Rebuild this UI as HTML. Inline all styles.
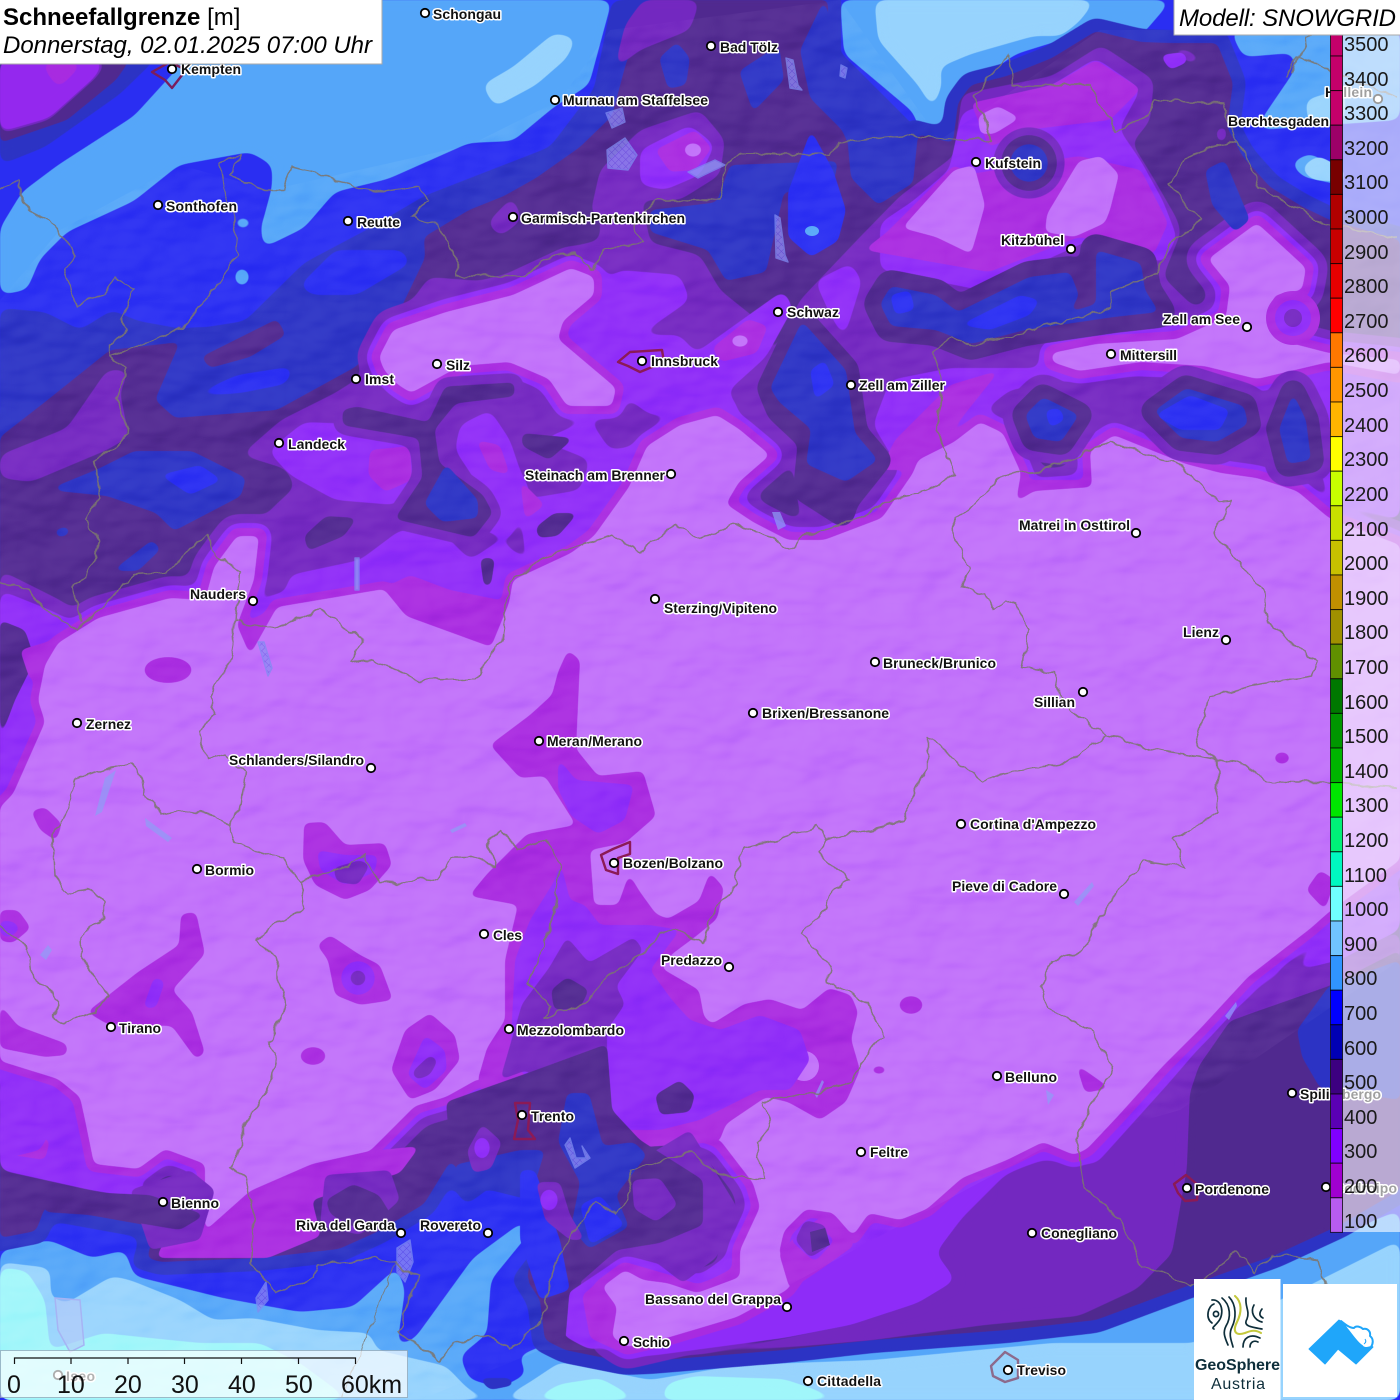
<!DOCTYPE html>
<html><head><meta charset="utf-8"><title>Schneefallgrenze</title>
<style>
html,body{margin:0;padding:0;width:1400px;height:1400px;overflow:hidden;background:#55a6f9}
svg{display:block;position:absolute;left:0;top:0}
.lb text{font:bold 14px "Liberation Sans",sans-serif;fill:#111;stroke:#fff;stroke-width:3px;paint-order:stroke;stroke-linejoin:round}
.dt circle{fill:#fff;stroke:#000;stroke-width:1.8}
.tk text{font:20px "Liberation Sans",sans-serif;fill:#1a1a1a}
</style></head><body>
<svg width="1400" height="1400" viewBox="0 0 1400 1400" xmlns="http://www.w3.org/2000/svg">
<defs>
<filter id="s" filterUnits="userSpaceOnUse" x="0" y="0" width="1400" height="1400" color-interpolation-filters="sRGB"><feGaussianBlur stdDeviation="5.5"/><feComponentTransfer><feFuncA type="linear" slope="14" intercept="-6.5"/></feComponentTransfer></filter>
<filter id="t" filterUnits="userSpaceOnUse" x="0" y="0" width="1400" height="1400" color-interpolation-filters="sRGB"><feGaussianBlur stdDeviation="3.4"/><feComponentTransfer><feFuncA type="linear" slope="10" intercept="-4.5"/></feComponentTransfer></filter>
<filter id="hill" filterUnits="userSpaceOnUse" x="0" y="0" width="1400" height="1400" color-interpolation-filters="sRGB"><feTurbulence type="fractalNoise" baseFrequency=".014 .024" numOctaves="3" seed="11" result="n"/><feDiffuseLighting in="n" surfaceScale="10" diffuseConstant=".74" lighting-color="#fff"><feDistantLight azimuth="225" elevation="58"/></feDiffuseLighting></filter>
<filter id="w" filterUnits="userSpaceOnUse" x="0" y="0" width="1400" height="1400"><feTurbulence type="fractalNoise" baseFrequency=".07" numOctaves="2" seed="4" result="n"/><feDisplacementMap in="SourceGraphic" in2="n" scale="9" xChannelSelector="R" yChannelSelector="G"/></filter>
<clipPath id="mt"><path d="M0 300L60 230L180 165L270 190L470 145L560 100L610 30L840 0L940 140L1100 30L1400 30L1400 960L1180 1110L1040 1150L780 1290L640 1350L540 1350L420 1400L0 1400Z"/></clipPath>
<pattern id="h" width="5" height="5" patternUnits="userSpaceOnUse" patternTransform="rotate(45)"><rect width="5" height="5" fill="#8f8cf5"/><path d="M0 0H5M0 0V5" stroke="#6b5be6" stroke-width="1"/></pattern>
<path id="m" d="M0 807L13 794L45 722L38 700L45 665L58 643L98 618L170 598L205 600L214 567L237 536L259 536L254 580L237 625L250 655L277 607L384 589L406 616L491 647L509 603L513 580L571 553L594 536L629 487L647 446L680 425L717 415L739 429L770 455L739 482L726 504L753 522L788 540L824 540L882 518L913 473L918 460L954 442L980 422L1003 433L1021 473L1016 502L1034 491L1092 487L1090 451L1114 435L1141 446L1186 464L1221 473L1257 478L1297 491L1329 518L1400 545L1400 860L1329 912L1311 928L1248 977L1199 1030L1163 1066L1119 1115L1087 1149L1074 1155L1043 1142L1007 1160L962 1178L927 1209L900 1220L869 1213L853 1236L833 1213L806 1209L784 1231L779 1253L797 1276L787 1290L737 1317L670 1337L627 1347L612 1337L617 1307L602 1287L625 1270L643 1280L667 1283L697 1293L740 1277L740 1250L760 1207L753 1183L720 1140L600 1100L478 1079L446 1097L415 1106L370 1151L312 1169L254 1191L205 1231L205 1164L165 1149L138 1169L94 1164L85 1120L80 1097L58 1079L0 1061Z
M379 357L393 330L446 312L513 295L571 268L594 277L594 295L563 321L558 339L616 388L612 406L567 406L549 379L509 362L460 366L411 393L397 384L384 370Z
M1208 259L1257 223L1306 268L1302 290L1275 295L1266 317L1275 339L1329 353L1400 360L1400 375L1329 362L1257 379L1204 366L1141 362L1079 371L1052 362L1052 353L1096 344L1177 339L1226 317L1230 286Z"/>
<path id="main" d="M0 437L45 402L110 350L180 342L155 400L175 418L277 410L357 366L400 310L425 258L424 237L469 210L504 196L536 178L580 147L612 116L625 67L647 0L828 0L828 58L846 125L851 178L878 205L913 183L918 134L953 143L958 103L971 85L1007 76L1052 58L1096 31L1141 42L1170 43L1217 43L1233 83L1227 127L1243 157L1270 187L1303 207L1330 220L1400 240L1400 1190L1340 1225L1275 1255L1190 1285L1096 1320L1007 1330L873 1340L784 1350L650 1361L625 1362L565 1350L545 1340L540 1300L527 1280L550 1250L554 1146L518 1151L469 1187L451 1160L424 1204L379 1231L339 1249L259 1258L161 1262L147 1258L156 1227L45 1207L36 1231L0 1238Z"/>
</defs>

<!-- base -->
<rect width="1400" height="1400" fill="#2a2ef2"/>
<g fill="#55a6f9" filter="url(#s)">
<path d="M185 60L134 116L58 165L22 192L0 228L0 295L27 290L40 259L67 232L134 201L179 165L250 152L272 165L272 187L261 228L263 248L304 228L335 192L388 179L469 143L513 141L554 107L589 85L612 0L0 0L0 60Z"/>
<path d="M840 0L844 54L913 112L922 136L940 134L958 80L971 85L1016 54L1074 36L1101 20L1141 36L1172 0Z"/>
<path d="M1230 30L1243 57L1293 53L1295 70L1263 117L1258 130L1287 128L1400 120L1400 30Z"/>
<path d="M1290 163L1310 153L1345 173L1345 186L1303 177Z"/>
<path d="M0 1251L49 1240L92 1258L125 1250L134 1276L223 1298L300 1312L353 1307L397 1267L405 1290L397 1347L415 1338L473 1258L522 1222L531 1231L491 1280L487 1334L460 1356L469 1379L500 1388L527 1374L518 1356L549 1343L571 1345L625 1368L696 1367L784 1358L873 1350L1007 1340L1096 1332L1194 1295L1275 1262L1350 1230L1400 1210L1400 1400L0 1400Z"/>
<ellipse cx="243" cy="223" rx="10" ry="6"/><ellipse cx="242" cy="277" rx="8" ry="10"/>
</g>
<g fill="#97d3fd" filter="url(#s)">
<path d="M482 85L513 67L554 33L576 38L567 58L536 85L495 107Z"/>
<path d="M875 7L878 40L918 85L933 109L942 85L940 67L971 54L1034 36L1061 36L1079 22L1096 0L875 0Z"/>
<path d="M1305 100L1345 88L1345 120L1310 130Z"/>
<path d="M1300 168L1318 155L1345 170L1345 182L1312 180Z"/>
<path d="M0 1262L50 1268L51 1298L67 1303L112 1276L130 1280L180 1300L213 1320L253 1318L317 1330L370 1333L377 1350L407 1357L446 1366L469 1390L500 1400L530 1382L560 1362L650 1380L739 1365L873 1360L1052 1343L1194 1343L1400 1240L1400 1400L0 1400Z"/>
</g>
<g fill="#a0f6fa" filter="url(#s)">
<path d="M0 1267L27 1271L45 1300L50 1350L103 1333L150 1338L200 1343L260 1343L300 1363L350 1400L0 1400Z"/>
<path d="M668 1383L695 1376L784 1379L846 1400L660 1400Z"/>
<path d="M530 1400L560 1384L600 1378L640 1400Z"/>
</g>

<!-- NW dark blue + top-left wedge -->
<g fill="#2c33c4" filter="url(#s)">
<path d="M0 308L45 312L80 330L112 310L138 321L188 330L245 321L304 263L370 228L424 196L550 147L594 89L612 0L660 0L660 300L300 440L0 460Z"/>
<path d="M0 165L45 147L120 94L160 55L0 55Z"/>
<use href="#main" fill="none" stroke="#2c33c4" stroke-width="26"/>
</g>
<g fill="#2a2ef2" filter="url(#s)">
<path d="M299 286L335 250L402 250L411 263L357 295L312 295Z"/>
<path d="M188 397L237 375L295 366L286 384L241 393Z"/>
</g>
<g fill="#50298f" filter="url(#t)">
<use href="#main"/>
<path d="M0 143L67 120L116 80L130 60L0 60Z"/>
<path d="M201 357L277 319L286 335L250 357L210 368Z"/>
</g>
<g fill="#7328c0" filter="url(#s)">
<path d="M0 134L49 120L98 76L107 60L0 60Z"/>
</g>
<path d="M0 60H104L96 76L49 118L0 132Z" fill="#9428ee" filter="url(#s)"/>
<path d="M40 62L85 62L58 89Z" fill="#a82be0" filter="url(#s)"/>

<!-- L400 -->
<g fill="#7328c0" filter="url(#s)">
<use href="#m" fill="none" stroke="#7328c0" stroke-width="44" stroke-linejoin="round"/>
<path d="M0 455L67 428L107 370L129 370L120 393L129 437L107 450L31 482L0 478Z"/>
<path d="M241 455L281 420L335 393L357 379L380 345L429 277L480 281L527 279L554 259L576 257L640 240L700 255L720 290L770 330L770 390L800 440L760 450L720 410L650 420L629 487L594 536L571 553L513 580L509 603L491 647L406 616L384 589L277 607L259 536L270 510L295 487L286 469Z"/>
<path d="M600 170L640 130L700 110L725 140L720 175L680 200L640 200L610 215L590 215Z"/>
<path d="M558 250L600 240L600 215L640 195L650 240L600 260Z"/>
<path d="M614 70L625 25L643 0L700 0L690 30L640 50Z"/>
<path d="M487 223L513 196L522 220L500 237Z"/>
<path d="M860 237L900 196L954 156L962 94L1007 85L1052 76L1101 45L1154 80L1150 121L1132 143L1154 179L1177 219L1181 232L1163 277L1199 312L1253 310L1290 370L1330 490L1340 540L1250 480L1100 440L1000 430L920 470L882 525L800 515L790 450L760 380L800 300Z"/>
<path d="M0 570L60 600L90 620L40 660L20 760L0 810Z"/>
<path d="M1165 47L1186 49L1205 60L1190 64Z"/>
<!-- SE -->
<path d="M936 1253L962 1218L1007 1173L1043 1160L1096 1164L1168 1084L1230 1012L1280 975L1340 960L1400 930L1400 960L1330 986L1230 1021L1199 1066L1190 1093L1187 1169L1172 1254L1137 1289L1079 1316L985 1325L873 1340L760 1350L650 1358L784 1338L851 1325L918 1303L956 1280Z"/>
</g>
<!-- L300 -->
<g fill="#8e2cf8" filter="url(#s)">
<path d="M268 451L304 422L380 425L415 440L418 480L395 505L335 500L290 475Z"/>
<path d="M460 425L490 410L510 440L520 470L530 490L510 540L470 525L475 480L455 450Z"/>
<path d="M280 610L290 575L360 560L400 530L440 530L470 560L500 540L525 560L510 600L495 645L440 630L410 615L384 589Z"/>
<path d="M540 440L590 420L610 450L640 445L630 490L600 530L570 550L525 555L520 500L580 490L590 460Z"/>
<path d="M565 310L620 270L680 275L690 300L640 335L680 335L720 380L740 410L650 415L630 400L610 370L565 340Z"/>
<path d="M690 357L753 312L784 290L793 308L766 357L726 393L695 375Z"/>
<path d="M640 150L690 125L715 145L700 175L665 190L640 185Z"/>
<path d="M815 281L851 263L862 281L844 339L829 312Z"/>
<path d="M880 223L913 201L949 170L962 112L1052 85L1096 58L1141 89L1119 129L1141 161L1163 201L1177 237L1163 263L1090 240L980 290L880 270Z"/>
<path d="M873 425L890 380L950 368L1040 368L1200 372L1262 370L1340 372L1340 410L1290 395L1240 380L1100 375L1010 390L960 430L900 470Z"/>
<path d="M1330 370L1400 385L1400 520L1330 500L1310 440L1312 395Z"/>
<path d="M1000 440L1060 450L1150 440L1250 470L1329 510L1300 495L1100 440Z"/>
<path d="M0 590L50 610L80 625L50 670L25 790L0 810Z"/>
<path d="M0 1075L60 1085L80 1100L85 1165L130 1170L150 1200L90 1190L0 1170Z"/>
<!-- SE L300 -->
<path d="M650 1338L739 1311L797 1280L851 1245L918 1218L998 1164L1043 1146L1083 1164L1163 1084L1230 1012L1297 968L1329 932L1400 880L1400 930L1340 960L1280 975L1230 1012L1168 1084L1096 1164L1043 1160L1007 1173L962 1218L936 1253L956 1280L918 1303L851 1325L784 1338L650 1356Z"/>
<path d="M565 1295L625 1255L700 1275L735 1250L750 1215L775 1285L660 1335L590 1350L562 1335Z"/>
<use href="#m" fill="none" stroke="#8e2cf8" stroke-width="26" stroke-linejoin="round"/>
</g>
<g fill="#50298f" filter="url(#t)">
<path d="M0 620L25 630L35 660L15 700L0 740Z"/>
<path d="M0 1097L22 1100L49 1113L22 1129L0 1129Z"/>
</g>
<!-- L200 -->
<g fill="#a82be0" filter="url(#t)">
<path d="M370 450L410 446L412 480L385 492L368 475Z"/>
<path d="M476 440L500 445L510 475L490 470Z"/>
<path d="M520 480L545 505L525 520Z"/>
<path d="M712 348L748 319L768 326L757 353L721 362Z"/>
<path d="M655 150L695 130L712 148L695 170L670 172Z"/>
<path d="M971 103L1052 85L1096 60L1141 89L1110 120L1034 129L989 147Z"/>
<path d="M887 232L954 165L971 174L1079 156L1141 170L1168 223L1154 254L1079 237L989 272L864 250Z"/>
<path d="M895 440L950 385L1000 370L960 420L920 470L880 470Z"/>
<path d="M1010 480L1090 480L1092 498L1016 506Z"/>
<path d="M240 625L262 680L290 680L322 655L275 640L277 607Z"/>
<path d="M20 650L70 635L55 665L30 680Z"/>
<path d="M380 590L410 575L450 590L500 600L495 645L440 632L406 612Z"/>
<path d="M582 1295L625 1262L670 1275L700 1285L745 1262L770 1280L680 1335L620 1352L590 1338Z"/>
<use href="#m" fill="none" stroke="#a82be0" stroke-width="16" stroke-linejoin="round"/>
</g>
<!-- L100 main -->
<g filter="url(#t)"><use href="#m" fill="#c06ffa"/></g>
<g fill="#c06ffa" filter="url(#t)">
<ellipse cx="693" cy="150" rx="9" ry="7"/><ellipse cx="740" cy="341" rx="9" ry="6"/>
<path d="M902 228L954 170L974 165L985 205L976 237L971 254L936 237Z"/>
<path d="M1047 214L1079 161L1101 156L1119 174L1110 210L1105 223L1074 237L1045 232Z"/>
<path d="M978 116L998 106L1020 118L994 134L980 134Z"/>
</g>
<circle cx="1293" cy="318" r="27" fill="#a82be0"/><circle cx="1293" cy="318" r="18" fill="#8e2cf8"/><circle cx="1293" cy="318" r="9" fill="#7328c0"/>

<!-- Dark network north / blue islands -->
<g filter="url(#s)" fill="#7328c0">
<circle cx="1029" cy="163" r="36"/>
<path d="M1025 415L1043 397L1079 415L1061 442L1034 438Z" stroke="#7328c0" stroke-width="46" stroke-linejoin="round"/>
<path d="M1154 411L1186 388L1244 406L1248 424L1217 442L1181 438Z" stroke="#7328c0" stroke-width="46" stroke-linejoin="round"/>
<path d="M1279 429L1293 393L1306 420L1311 460L1288 464Z" stroke="#7328c0" stroke-width="46" stroke-linejoin="round"/>
<path d="M344 411L357 408L429 424L446 388L513 384L513 395L455 402L433 429L438 464L482 496L491 513L473 536L397 518L424 478L420 437L344 424Z" stroke="#7328c0" stroke-width="22" stroke-linejoin="round"/>
</g>
<g fill="#50298f" filter="url(#t)">
<circle cx="1029" cy="163" r="28"/>
<path d="M1025 415L1043 397L1079 415L1061 442L1034 438Z" stroke="#50298f" stroke-width="26" stroke-linejoin="round"/>
<path d="M1154 411L1186 388L1244 406L1248 424L1217 442L1181 438Z" stroke="#50298f" stroke-width="26" stroke-linejoin="round"/>
<path d="M1279 429L1293 393L1306 420L1311 460L1288 464Z" stroke="#50298f" stroke-width="26" stroke-linejoin="round"/>
<path d="M344 411L357 408L429 424L446 388L513 384L513 395L455 402L433 429L438 464L482 496L491 513L473 536L397 518L424 478L420 437L344 424Z" stroke="#50298f" stroke-width="3"/>
<path d="M522 433L574 438L549 460L522 446Z"/>
<path d="M304 536L326 516L357 518L344 536L308 551Z"/>
<path d="M536 527L554 513L578 513L558 536L538 538Z"/>
<path d="M480 558L495 558L491 585L484 587Z"/>
<path d="M770 388L802 321L846 370L855 433L878 460L846 500L842 513L806 490L811 440L779 410Z" stroke="#50298f" stroke-width="26" stroke-linejoin="round"/>
<path d="M880 304L891 286L936 295L958 312L1029 277L1070 272L1079 295L1070 312L1096 304L1096 250L1141 263L1145 290L1159 312L1114 317L1025 330L971 344L936 330L891 326Z" stroke="#50298f" stroke-width="32" stroke-linejoin="round"/>
</g>
<g fill="#2c33c4" filter="url(#t)">
<circle cx="1029" cy="163" r="19"/>
<path d="M1025 415L1043 397L1079 415L1061 442L1034 438Z"/>
<path d="M1154 411L1186 388L1244 406L1248 424L1217 442L1181 438Z"/>
<path d="M1279 429L1293 393L1306 420L1311 460L1288 464Z"/>
<path d="M770 388L802 321L846 370L855 433L878 460L846 482L806 464L811 429L779 402Z"/>
<path d="M880 304L891 286L936 295L958 312L1029 277L1070 272L1079 295L1070 312L1096 304L1096 250L1141 263L1145 290L1159 312L1114 317L1025 330L971 344L936 330L891 326Z"/>
<path d="M424 504L446 464L478 500L478 518L442 522Z"/>
<path d="M54 487L98 469L134 451L192 451L246 478L241 496L174 531L156 513L107 496L58 491Z"/>
<path d="M112 571L152 540L161 549L138 571Z"/>
<path d="M54 530L68 526L70 534L58 538Z"/>
<path d="M717 201L730 165L838 161L833 187L784 192L766 272L726 281L708 250Z"/>
<path d="M650 210L695 205L726 201L708 250L650 232Z"/>
<path d="M659 58L677 42L690 58L686 85L668 89Z"/>
<path d="M739 71L779 45L784 80L753 112Z"/>
<path d="M824 0L842 54L918 130L900 174L882 196L860 170L842 130L810 98L800 50Z"/>
<path d="M1205 170L1225 160L1250 220L1235 232L1212 205Z"/>
</g>
<g fill="#2a2ef2" filter="url(#t)">
<path d="M788 192L811 130L833 170L846 210L838 241L811 257L788 237Z"/>
<path d="M1155 415L1190 395L1230 410L1220 430L1180 430Z"/>
<path d="M1045 410L1060 408L1065 420L1050 428Z"/>
<path d="M960 325L1020 295L1040 300L1030 315L990 330Z"/>
<path d="M890 295L910 290L915 310L895 315Z"/>
<path d="M160 475L200 465L222 480L190 495Z"/>
<path d="M810 370L825 360L835 385L815 400Z"/>
</g>
<ellipse cx="812" cy="231" rx="7" ry="5" fill="#55a6f9"/>

<!-- K map small bright/violet -->
<path d="M1160 55L1184 52L1188 62L1170 70Z" fill="#8e2cf8" filter="url(#t)"/>
<path d="M1216 130L1226 126L1226 140L1218 142Z" fill="#7328c0" filter="url(#t)"/>

<!-- L200 islands on L100 -->
<g fill="#a82be0" filter="url(#t)">
<ellipse cx="168" cy="670" rx="24" ry="13"/>
<path d="M31 811L45 807L62 824L56 841L40 830Z"/>
<path d="M304 823L325 822L345 845L385 843L392 865L370 890L345 900L315 885L303 860Z"/>
<path d="M87 1012L138 972L179 945L181 914L196 912L205 954L172 990L192 1012L205 1053L196 1059L172 1026L107 1024Z"/>
<path d="M317 945L330 935L360 955L380 965L393 1000L360 1005L335 995L328 960Z"/>
<ellipse cx="313" cy="1056" rx="13" ry="9"/>
<path d="M391 1070L405 1030L430 1013L455 1035L460 1060L435 1090L410 1100Z"/>
<path d="M0 910L18 910L31 928L13 943L0 941Z"/>
<path d="M0 1004L18 1026L67 1044L67 1055L45 1057L0 1048Z"/>
<ellipse cx="911" cy="1005" rx="12" ry="9"/><ellipse cx="879" cy="1070" rx="8" ry="4"/>
<path d="M1076 1064L1110 1088L1085 1093Z"/>
<ellipse cx="1282" cy="758" rx="8" ry="6"/>
<path d="M1306 890L1320 870L1335 880L1325 910Z"/>
<!-- South Central L200 -->
<path d="M558 672L568 650L580 660L576 749L598 776L643 771L656 816L625 843L590 850L594 905L618 905L629 874L640 892L656 914L668 919L699 901L710 872L724 888L717 919L695 937L672 954L661 968L699 990L704 1017L712 1024L744 1004L770 999L802 1010L829 988L851 995L858 1012L851 1039L860 1070L846 1102L820 1120L788 1102L766 1097L726 1124L719 1142L600 1150L480 1090L478 1079L487 1048L505 1020L505 960L518 905L469 896L487 874L527 834L576 825L545 776L520 778L490 745L530 715L552 695Z"/>
<path d="M156 1258L165 1240L205 1231L250 1191L312 1164L370 1151L420 1146L400 1173L312 1200L321 1236L268 1258Z"/>
<path d="M10 1130L50 1140L45 1160L12 1155Z"/>
<path d="M779 1253L797 1235L830 1210L855 1245L820 1270L790 1290Z"/>
</g>
<circle cx="804" cy="1066" r="15" fill="#c06ffa"/>
<g fill="#8e2cf8" filter="url(#t)">
<path d="M317 850L345 855L378 855L375 872L345 885L320 870Z"/>
<path d="M143 1008L154 977L165 981L156 1008Z"/>
<circle cx="358" cy="978" r="17"/>
<path d="M407 1075L425 1035L445 1050L447 1070L425 1090Z"/>
<path d="M558 758L576 780L634 785L625 820L598 834L571 816L558 789Z"/>
<path d="M560 860L570 900L585 905L600 925L650 925L680 930L650 970L672 1000L690 1020L720 1030L760 1015L800 1030L810 1060L790 1090L760 1090L720 1110L700 1120L660 1130L600 1130L540 1090L510 1060L515 960L530 920L555 880Z"/>
<path d="M790 1240L812 1222L835 1240L815 1262Z"/>
<path d="M670 1030L680 1060L710 1100L680 1110L650 1080Z"/>
<path d="M0 1085L30 1090L60 1115L40 1150L0 1160Z"/>
<path d="M0 920L15 922L20 930L8 938L0 934Z"/>
</g>
<g fill="#7328c0" filter="url(#t)">
<circle cx="358" cy="978" r="8"/>
<path d="M412 1072L430 1055L438 1060L430 1075L416 1080Z"/>
<path d="M333 868L360 860L370 865L358 885L337 882Z"/>
<path d="M567 937L589 963L634 937L643 950L616 986L625 1004L607 1030L607 1053L612 1110L560 1110L527 1070L500 1080L522 1004L549 968Z"/>
<path d="M805 1220L825 1225L830 1245L810 1258L795 1240Z"/>
<path d="M130 1190L190 1170L215 1190L200 1240L150 1250Z"/>
<path d="M690 1130L737 1207L717 1257L683 1283L657 1263L627 1250L600 1240L640 1160Z"/>
<path d="M325 1175L390 1170L400 1200L360 1235L320 1225Z"/>
</g>
<path d="M810 1232L825 1228L830 1245L812 1252Z" fill="#50298f"/>
<g fill="#50298f" filter="url(#t)">
<path d="M551 990L567 977L589 990L580 1008L554 1010Z"/>
<path d="M446 1102L536 1070L607 1044L612 1110L640 1140L703 1180L703 1225L660 1243L617 1250L560 1300L527 1280L540 1200L500 1160L451 1160Z"/>
<path d="M326 1200L353 1184L379 1195L393 1218L353 1227L330 1214Z"/>
<path d="M655 1095L680 1080L695 1095L690 1112L660 1115Z"/>
<path d="M40 1190L150 1195L205 1215L180 1230L90 1215L45 1212Z"/>
<path d="M540 1300L570 1285L565 1345L545 1340Z"/>
<path d="M1190 1093L1199 1066L1230 1021L1329 986L1400 950L1400 1190L1275 1255L1190 1285L1137 1289L1172 1254L1187 1169Z"/>
</g>
<g fill="#2c33c4" filter="url(#t)">
<path d="M1297 1030L1329 986L1400 960L1400 1100L1320 1088L1302 1057Z"/>
<path d="M567 1093L589 1093L603 1146L634 1142L647 1155L616 1195L629 1227L589 1249L571 1227L580 1182L558 1142Z"/>
<path d="M454 1165L520 1150L545 1150L530 1200L490 1190L465 1195Z"/>
</g>
<g fill="#2a2ef2" filter="url(#t)">
<path d="M520 1170L535 1170L560 1240L570 1290L540 1300L520 1240Z"/>
<path d="M580 1205L600 1195L625 1225L590 1245Z"/>
</g>
<g fill="#7328c0" filter="url(#t)">
<path d="M536 1182L560 1182L570 1215L585 1240L570 1240L545 1220Z"/>
<path d="M467 1151L482 1124L502 1142L491 1169L473 1173Z"/>
<path d="M632 1180L660 1178L678 1205L656 1222L634 1209Z"/>
</g>
<g fill="#8e2cf8" filter="url(#t)">
<ellipse cx="549" cy="1200" rx="9" ry="11"/><ellipse cx="482" cy="1148" rx="8" ry="11"/>
</g>
<path d="M478 1378L510 1378L515 1385L490 1390Z" fill="#2c33c4" filter="url(#t)"/>

<!-- Hillshade -->
<rect width="1400" height="1400" filter="url(#hill)" clip-path="url(#mt)" style="mix-blend-mode:soft-light" opacity=".34"/>

<!-- Lakes -->
<g fill="url(#h)" stroke="#7f8cf2" stroke-width="1.4" stroke-linejoin="round" opacity=".75">
<path d="M786 58L793 60L798 85L802 90L790 88Z"/>
<path d="M841 65L847 68L845 78L840 76Z"/>
<path d="M607 150L625 138L637 155L628 170L608 168Z"/>
<path d="M606 113L622 108L625 122L612 128Z"/>
<path d="M688 172L715 160L725 165L704 175L698 178Z" fill="#8f9cf5"/>
<path d="M775 215L780 218L785 255L788 262L776 258Z"/>
<path d="M258 642L264 642L272 668L268 676Z"/>
<path d="M355 558L359 558L359 590L355 590Z" fill="#8f9cf5"/>
<path d="M397 1248L410 1240L413 1262L405 1282L397 1272Z"/>
<path d="M256 1298L266 1282L268 1300L258 1312Z"/>
<path d="M565 1145L570 1138L576 1158L586 1158L582 1146L590 1158L575 1168Z"/>
</g>
<path d="M55 1298L80 1300L84 1345L70 1352L58 1330Z" fill="#b6c8f8" fill-opacity=".6" stroke="#a6b4f4" stroke-width="1.5"/>
<g fill="#8f9cf5" opacity=".7">
<path d="M1074 902L1092 882L1094 886L1078 906Z"/><path d="M1225 1016L1236 1002L1237 1006L1229 1020Z"/>
<path d="M815 1095L822 1080L824 1082L817 1098Z"/><path d="M1046 1090L1054 1095L1048 1105Z"/>
<path d="M40 955L48 945L52 950L46 960Z"/><path d="M450 830L465 823L467 826L452 833Z"/>
<path d="M105 778L116 770L102 812L95 816Z"/><path d="M145 818L172 838L168 842L146 826Z"/>
<path d="M772 512L780 512L786 526L778 530Z"/>
</g>

<!-- Borders -->
<g fill="none" stroke="#7c7670" stroke-width="1.5" stroke-linejoin="round" opacity=".88" filter="url(#w)" transform="translate(-3 -3)">
<path d="M0 194L20 185L31 214L58 228L80 259L67 272L80 308L107 297L116 283L138 292L125 321L129 335L112 348L112 359L170 339L185 330L219 290L241 259L237 223L228 196L223 165L245 158L232 179L268 192L286 192L295 170L330 179L348 187L366 192L388 196L422 190L433 205L413 219L440 228L460 263L460 279L527 279L554 259L576 257L598 272L607 252L647 246L636 228L661 203L721 203L730 165L744 156L833 158L842 145L909 138L971 143L994 143L978 98L1012 58L1016 89L1092 87L1119 134L1150 121L1159 103L1226 107L1239 143L1186 161L1172 187L1204 223L1177 241L1159 277L1114 295L1114 312L1043 330L1016 339L971 348L954 339L936 357L945 384L940 433L958 478L936 491L896 502L860 522L806 540L793 553L775 540L739 527L704 542L677 527L643 556L616 538L540 563L513 585L504 643L478 681L420 683L375 661L353 665L366 643L324 612L277 632L239 625L243 576L219 558L210 536L170 576L138 578L94 620L80 632L58 620L45 607L22 589L0 585"/>
<path d="M112 359L129 370L120 402L132 437L98 464L103 500L89 522L103 545L89 580L76 590L85 625"/>
<path d="M1239 143L1263 190L1329 228L1400 240M1295 76L1310 40L1330 30M1290 80L1300 60L1400 100"/>
<path d="M239 625L232 665L214 700L217 718L203 733L210 762L228 758L248 776L243 812L232 829L237 847L286 861L304 883L339 874L368 858L382 885L408 887L420 881L440 883L455 861L473 861L498 870L491 843L505 832L520 852L551 843L563 870L554 932L531 986L554 1008L545 1021L585 1008L616 977L647 955L665 937L677 934L708 946L712 923L739 887L746 850L779 843L820 829L829 843L904 825L931 771L931 740L985 785L998 778L1065 767L1110 738L1150 751L1219 762L1221 816L1177 843L1188 870L1148 865L1119 896L1099 928L1083 954L1056 963L1043 990L1052 1012L1094 1035L1116 1070L1096 1106L1079 1142L1087 1191L1123 1222L1145 1271L1172 1276L1194 1291L1217 1276L1239 1254L1257 1276L1275 1258L1320 1262L1330 1290L1300 1290"/>
<path d="M304 883L308 910L272 932L259 943L281 963L281 986L290 1008L272 1044L279 1057L272 1093L245 1129L245 1151L232 1169L248 1182L257 1218L254 1267L281 1296L317 1280L321 1267L371 1262L397 1265L420 1280L402 1334L442 1365L455 1347L491 1338L513 1352L545 1325L554 1276L580 1231L598 1204L620 1218L634 1196L632 1173L695 1155L721 1178L766 1182L759 1146L773 1129L766 1104L829 1093L855 1084L871 1057L887 1039L869 1004L829 986L833 968L804 937L831 910L835 892L853 883L822 856L829 843"/>
<path d="M956 522L958 545L974 571L965 589L989 598L996 612L1007 603L1020 607L1032 634L1025 670L1056 674L1065 700L1080 720L1110 738M956 522L972 513L996 487L1007 478L1040 476M1040 476L1114 445L1186 470L1221 505L1235 504L1217 536L1266 594L1270 625L1320 665L1315 679L1253 688L1212 700L1199 745L1219 762L1250 768L1270 785L1329 785L1400 790"/>
<path d="M134 765L80 780L71 812L56 838L58 879L71 896L92 892L107 905L107 919L83 941L85 963L112 999L98 1015L67 1026L56 1019L62 1004L36 981L31 950L0 928M134 765L143 780L147 798L165 818L187 814L219 818L232 829"/>
<path d="M398 1265L345 1400" stroke-width="1"/>
</g>
<!-- City limits -->
<g fill="none" stroke="#8b1a56" stroke-width="2.4" stroke-linejoin="round">
<path d="M152 72L170 62L186 70L172 88L165 80Z" stroke="#7a1d5c"/>
<path d="M618 362L630 352L662 350L664 362L640 372L628 366Z"/>
<path d="M601 855L613 849L630 842L630 854L618 858L618 874L606 870Z"/>
<path d="M515 1103L530 1103L528 1130L535 1139L514 1139L518 1120Z"/>
<path d="M1174 1184L1186 1175L1198 1185L1197 1200L1185 1201L1178 1193Z"/>
<path d="M991 1366L1005 1352L1018 1360L1018 1378L1005 1382L993 1376Z" stroke="#8c6a8c"/>
</g>

<!-- Labels -->
<g class="dt">
<circle cx="172" cy="69" r="4.200"/><circle cx="425" cy="13" r="4.200"/><circle cx="711" cy="46" r="4.200"/><circle cx="555" cy="100" r="4.200"/><circle cx="976" cy="162" r="4.200"/><circle cx="1378" cy="99" r="4.200"/><circle cx="158" cy="205" r="4.200"/><circle cx="348" cy="221" r="4.200"/><circle cx="513" cy="217" r="4.200"/><circle cx="1071" cy="249" r="4.200"/><circle cx="778" cy="312" r="4.200"/><circle cx="1247" cy="327" r="4.200"/><circle cx="1111" cy="354" r="4.200"/><circle cx="356" cy="379" r="4.200"/><circle cx="437" cy="364" r="4.200"/><circle cx="642" cy="361" r="4.200"/><circle cx="851" cy="385" r="4.200"/><circle cx="279" cy="443" r="4.200"/><circle cx="671" cy="474" r="4.200"/><circle cx="1136" cy="533" r="4.200"/><circle cx="253" cy="601" r="4.200"/><circle cx="655" cy="599" r="4.200"/><circle cx="1226" cy="640" r="4.200"/><circle cx="875" cy="662" r="4.200"/><circle cx="1083" cy="692" r="4.200"/><circle cx="753" cy="713" r="4.200"/><circle cx="77" cy="723" r="4.200"/><circle cx="539" cy="741" r="4.200"/><circle cx="371" cy="768" r="4.200"/><circle cx="961" cy="824" r="4.200"/><circle cx="614" cy="863" r="4.200"/><circle cx="197" cy="869" r="4.200"/><circle cx="1064" cy="894" r="4.200"/><circle cx="484" cy="934" r="4.200"/><circle cx="729" cy="967" r="4.200"/><circle cx="111" cy="1027" r="4.200"/><circle cx="509" cy="1029" r="4.200"/><circle cx="997" cy="1076" r="4.200"/><circle cx="1292" cy="1093" r="4.200"/><circle cx="522" cy="1115" r="4.200"/><circle cx="861" cy="1152" r="4.200"/><circle cx="1187" cy="1188" r="4.200"/><circle cx="1326" cy="1187" r="4.200"/><circle cx="163" cy="1202" r="4.200"/><circle cx="401" cy="1233" r="4.200"/><circle cx="488" cy="1233" r="4.200"/><circle cx="1032" cy="1233" r="4.200"/><circle cx="787" cy="1307" r="4.200"/><circle cx="624" cy="1341" r="4.200"/><circle cx="1008" cy="1370" r="4.200"/><circle cx="808" cy="1381" r="4.200"/><circle cx="58" cy="1375" r="4.200"/>
</g>
<g class="lb">
<text x="181" y="74" textLength="60">Kempten</text>
<text x="433" y="19" textLength="68">Schongau</text>
<text x="720" y="52" textLength="58">Bad Tölz</text>
<text x="563" y="105" textLength="145">Murnau am Staffelsee</text>
<text x="985" y="168" textLength="56">Kufstein</text>
<text x="1228" y="126" textLength="101">Berchtesgaden</text>
<text x="1325" y="97" textLength="47">Hallein</text>
<text x="166" y="211" textLength="71">Sonthofen</text>
<text x="357" y="227" textLength="43">Reutte</text>
<text x="521" y="223" textLength="164">Garmisch-Partenkirchen</text>
<text x="1001" y="245" textLength="63">Kitzbühel</text>
<text x="787" y="317" textLength="52">Schwaz</text>
<text x="1163" y="324" textLength="77">Zell am See</text>
<text x="1120" y="360" textLength="57">Mittersill</text>
<text x="365" y="384" textLength="29">Imst</text>
<text x="446" y="370" textLength="24">Silz</text>
<text x="651" y="366" textLength="67">Innsbruck</text>
<text x="859" y="390" textLength="86">Zell am Ziller</text>
<text x="288" y="449" textLength="57">Landeck</text>
<text x="525" y="480" textLength="140">Steinach am Brenner</text>
<text x="1019" y="530" textLength="111">Matrei in Osttirol</text>
<text x="190" y="599" textLength="56">Nauders</text>
<text x="664" y="613" textLength="113">Sterzing/Vipiteno</text>
<text x="1183" y="637" textLength="36">Lienz</text>
<text x="883" y="668" textLength="113">Bruneck/Brunico</text>
<text x="1034" y="707" textLength="41">Sillian</text>
<text x="762" y="718" textLength="127">Brixen/Bressanone</text>
<text x="86" y="729" textLength="45">Zernez</text>
<text x="547" y="746" textLength="95">Meran/Merano</text>
<text x="229" y="765" textLength="135">Schlanders/Silandro</text>
<text x="970" y="829" textLength="126">Cortina d'Ampezzo</text>
<text x="623" y="868" textLength="100">Bozen/Bolzano</text>
<text x="205" y="875" textLength="49">Bormio</text>
<text x="952" y="891" textLength="105">Pieve di Cadore</text>
<text x="493" y="940" textLength="29">Cles</text>
<text x="661" y="965" textLength="61">Predazzo</text>
<text x="119" y="1033" textLength="42">Tirano</text>
<text x="517" y="1035" textLength="107">Mezzolombardo</text>
<text x="1005" y="1082" textLength="52">Belluno</text>
<text x="1300" y="1099" textLength="81">Spilimbergo</text>
<text x="531" y="1121" textLength="43">Trento</text>
<text x="870" y="1157" textLength="38">Feltre</text>
<text x="1195" y="1194" textLength="74">Pordenone</text>
<text x="1334" y="1193" textLength="63">Codroipo</text>
<text x="171" y="1208" textLength="48">Bienno</text>
<text x="296" y="1230" textLength="99">Riva del Garda</text>
<text x="420" y="1230" textLength="61">Rovereto</text>
<text x="1041" y="1238" textLength="76">Conegliano</text>
<text x="645" y="1304" textLength="136">Bassano del Grappa</text>
<text x="633" y="1347" textLength="37">Schio</text>
<text x="1017" y="1375" textLength="49">Treviso</text>
<text x="817" y="1386" textLength="64">Cittadella</text>
<text x="66" y="1381" textLength="29">Iseo</text>
</g>

<!-- Colorbar overlay -->
<rect x="1330" y="35" width="70" height="1197" fill="#fff" fill-opacity=".6"/>
<g stroke="#000" stroke-opacity=".75" stroke-width="1">
<rect x="1330.5" y="21" width="12" height="35" fill="#c4006a"/>
<rect x="1330.5" y="56" width="12" height="34.6" fill="#c4006a"/>
<rect x="1330.5" y="90.6" width="12" height="34.6" fill="#c4006a"/>
<rect x="1330.5" y="125.2" width="12" height="34.6" fill="#9c0068"/>
<rect x="1330.5" y="159.8" width="12" height="34.6" fill="#780000"/>
<rect x="1330.5" y="194.4" width="12" height="34.6" fill="#b00000"/>
<rect x="1330.5" y="229" width="12" height="34.6" fill="#c80000"/>
<rect x="1330.5" y="263.6" width="12" height="34.6" fill="#e60000"/>
<rect x="1330.5" y="298.2" width="12" height="34.6" fill="#ff0000"/>
<rect x="1330.5" y="332.8" width="12" height="34.6" fill="#ff7800"/>
<rect x="1330.5" y="367.4" width="12" height="34.6" fill="#ff9600"/>
<rect x="1330.5" y="402" width="12" height="34.6" fill="#ffb400"/>
<rect x="1330.5" y="436.6" width="12" height="34.6" fill="#ffff00"/>
<rect x="1330.5" y="471.2" width="12" height="34.6" fill="#c8ff00"/>
<rect x="1330.5" y="505.8" width="12" height="34.6" fill="#c8e000"/>
<rect x="1330.5" y="540.4" width="12" height="34.6" fill="#c8c000"/>
<rect x="1330.5" y="575" width="12" height="34.6" fill="#c09000"/>
<rect x="1330.5" y="609.6" width="12" height="34.6" fill="#a09000"/>
<rect x="1330.5" y="644.2" width="12" height="34.6" fill="#609000"/>
<rect x="1330.5" y="678.8" width="12" height="34.6" fill="#007800"/>
<rect x="1330.5" y="713.4" width="12" height="34.6" fill="#009600"/>
<rect x="1330.5" y="748" width="12" height="34.6" fill="#00b400"/>
<rect x="1330.5" y="782.6" width="12" height="34.6" fill="#00e600"/>
<rect x="1330.5" y="817.2" width="12" height="34.6" fill="#00f078"/>
<rect x="1330.5" y="851.8" width="12" height="34.6" fill="#00f8c0"/>
<rect x="1330.5" y="886.4" width="12" height="34.6" fill="#70ffff"/>
<rect x="1330.5" y="921" width="12" height="34.6" fill="#70c4ff"/>
<rect x="1330.5" y="955.6" width="12" height="34.6" fill="#3094ff"/>
<rect x="1330.5" y="990.2" width="12" height="34.6" fill="#0000ff"/>
<rect x="1330.5" y="1024.8" width="12" height="34.6" fill="#0000b4"/>
<rect x="1330.5" y="1059.4" width="12" height="34.6" fill="#3c0080"/>
<rect x="1330.5" y="1094" width="12" height="34.6" fill="#5a00b4"/>
<rect x="1330.5" y="1128.6" width="12" height="34.6" fill="#8000ff"/>
<rect x="1330.5" y="1163.2" width="12" height="34.6" fill="#a000d0"/>
<rect x="1330.5" y="1197.8" width="12" height="34.6" fill="#b85cf0"/>
</g>
<g class="tk">
<text x="1344" y="51">3500</text><text x="1344" y="86">3400</text><text x="1344" y="120">3300</text><text x="1344" y="155">3200</text><text x="1344" y="189">3100</text><text x="1344" y="224">3000</text><text x="1344" y="259">2900</text><text x="1344" y="293">2800</text><text x="1344" y="328">2700</text><text x="1344" y="362">2600</text><text x="1344" y="397">2500</text><text x="1344" y="432">2400</text><text x="1344" y="466">2300</text><text x="1344" y="501">2200</text><text x="1344" y="536">2100</text><text x="1344" y="570">2000</text><text x="1344" y="605">1900</text><text x="1344" y="639">1800</text><text x="1344" y="674">1700</text><text x="1344" y="709">1600</text><text x="1344" y="743">1500</text><text x="1344" y="778">1400</text><text x="1344" y="812">1300</text><text x="1344" y="847">1200</text><text x="1344" y="882">1100</text><text x="1344" y="916">1000</text><text x="1344" y="951">900</text><text x="1344" y="985">800</text><text x="1344" y="1020">700</text><text x="1344" y="1055">600</text><text x="1344" y="1089">500</text><text x="1344" y="1124">400</text><text x="1344" y="1158">300</text><text x="1344" y="1193">200</text><text x="1344" y="1228">100</text>
</g>

<!-- Title boxes -->
<rect x="0" y="0" width="382" height="64" fill="#fff"/><path d="M382 0V64H0" fill="none" stroke="#aaa"/>
<text x="3" y="25" font-family="Liberation Sans" font-size="24" fill="#000"><tspan font-weight="bold">Schneefallgrenze</tspan> [m]</text>
<text x="3" y="53" font-family="Liberation Sans" font-size="24" font-style="italic" fill="#000" textLength="369">Donnerstag, 02.01.2025 07:00 Uhr</text>
<rect x="1174" y="0" width="226" height="35" fill="#fff"/><path d="M1174 0V35H1400" fill="none" stroke="#aaa"/>
<text x="1179" y="26" font-family="Liberation Sans" font-size="24" font-style="italic" fill="#000" textLength="217">Modell: SNOWGRID</text>

<!-- Scale -->
<rect x="0.5" y="1350.5" width="407" height="47" fill="#fff" fill-opacity=".68" stroke="#8a9fb0" stroke-opacity=".7"/>
<path d="M14.5 1364V1358H355.5V1364M71 1358V1364M128 1358V1364M184.500 1358V1364M241.500 1358V1364M298.500 1358V1364" fill="none" stroke="#111" stroke-width="1.2"/>
<g font-family="Liberation Sans" font-size="25" fill="#111">
<text x="7" y="1393">0</text><text x="57" y="1393">10</text><text x="114" y="1393">20</text><text x="171" y="1393">30</text><text x="228" y="1393">40</text><text x="285" y="1393">50</text><text x="341" y="1393">60km</text>
</g>

<!-- GeoSphere logo -->
<rect x="1194" y="1279" width="86.500" height="121" fill="#fff"/>
<g fill="none" stroke="#0e2e3a" stroke-width="1.7" stroke-linecap="round">
<circle cx="1216" cy="1314" r="2.6"/>
<path d="M1214 1304C1208 1306 1205 1318 1212 1323"/>
<path d="M1212 1300C1222 1299 1225 1314 1218 1322C1215 1326 1211 1328 1214 1329"/>
<path d="M1222 1298C1231 1305 1231 1318 1226 1326C1223 1332 1224 1336 1228 1345"/>
<path d="M1229 1297C1237 1305 1236 1319 1232 1327C1228 1335 1232 1342 1233 1347"/>
<path d="M1246 1298C1245 1307 1250 1311 1247 1319C1243 1326 1250 1327 1262 1329"/>
<path d="M1254 1305C1250 1312 1254 1320 1262 1322"/>
<path d="M1262 1309C1259 1313 1259 1316 1263 1318"/>
<path d="M1243 1347C1243 1338 1250 1333 1260 1338"/>
<path d="M1250 1347C1250 1342 1254 1340 1258 1342"/>
</g>
<path d="M1235 1296C1242 1302 1242 1312 1237 1322C1232 1332 1236 1336 1245 1333C1252 1330 1256 1330 1261 1333" fill="none" stroke="#c4c83c" stroke-width="2.1" stroke-linecap="round"/>
<text x="1195" y="1370" font-family="Liberation Sans" font-size="16" font-weight="bold" fill="#0e2e3a" textLength="85">GeoSphere</text>
<text x="1211" y="1389" font-family="Liberation Sans" font-size="16" fill="#0e2e3a" textLength="54">Austria</text>

<!-- Right logo -->
<rect x="1283" y="1284" width="114" height="113" fill="#fff"/>
<path d="M1309 1349L1339 1320L1373 1347L1356 1364L1338 1349L1325 1364Z" fill="#1fa6fa" stroke="#1fa6fa" stroke-linejoin="round"/>
<path d="M1341 1321C1346 1325 1350 1328 1354 1328C1356 1325 1361 1327 1363 1329C1367 1328 1371 1331 1370 1336C1374 1339 1373 1344 1371 1347C1367 1348 1364 1349 1362 1346C1357 1343 1352 1335 1347 1329Z" fill="#fff" stroke="#1fa6fa" stroke-width="2" stroke-linejoin="round"/>
<path d="M1365 1339Q1367 1342 1364 1344" fill="none" stroke="#1fa6fa" stroke-width="1"/>
</svg>
</body></html>
